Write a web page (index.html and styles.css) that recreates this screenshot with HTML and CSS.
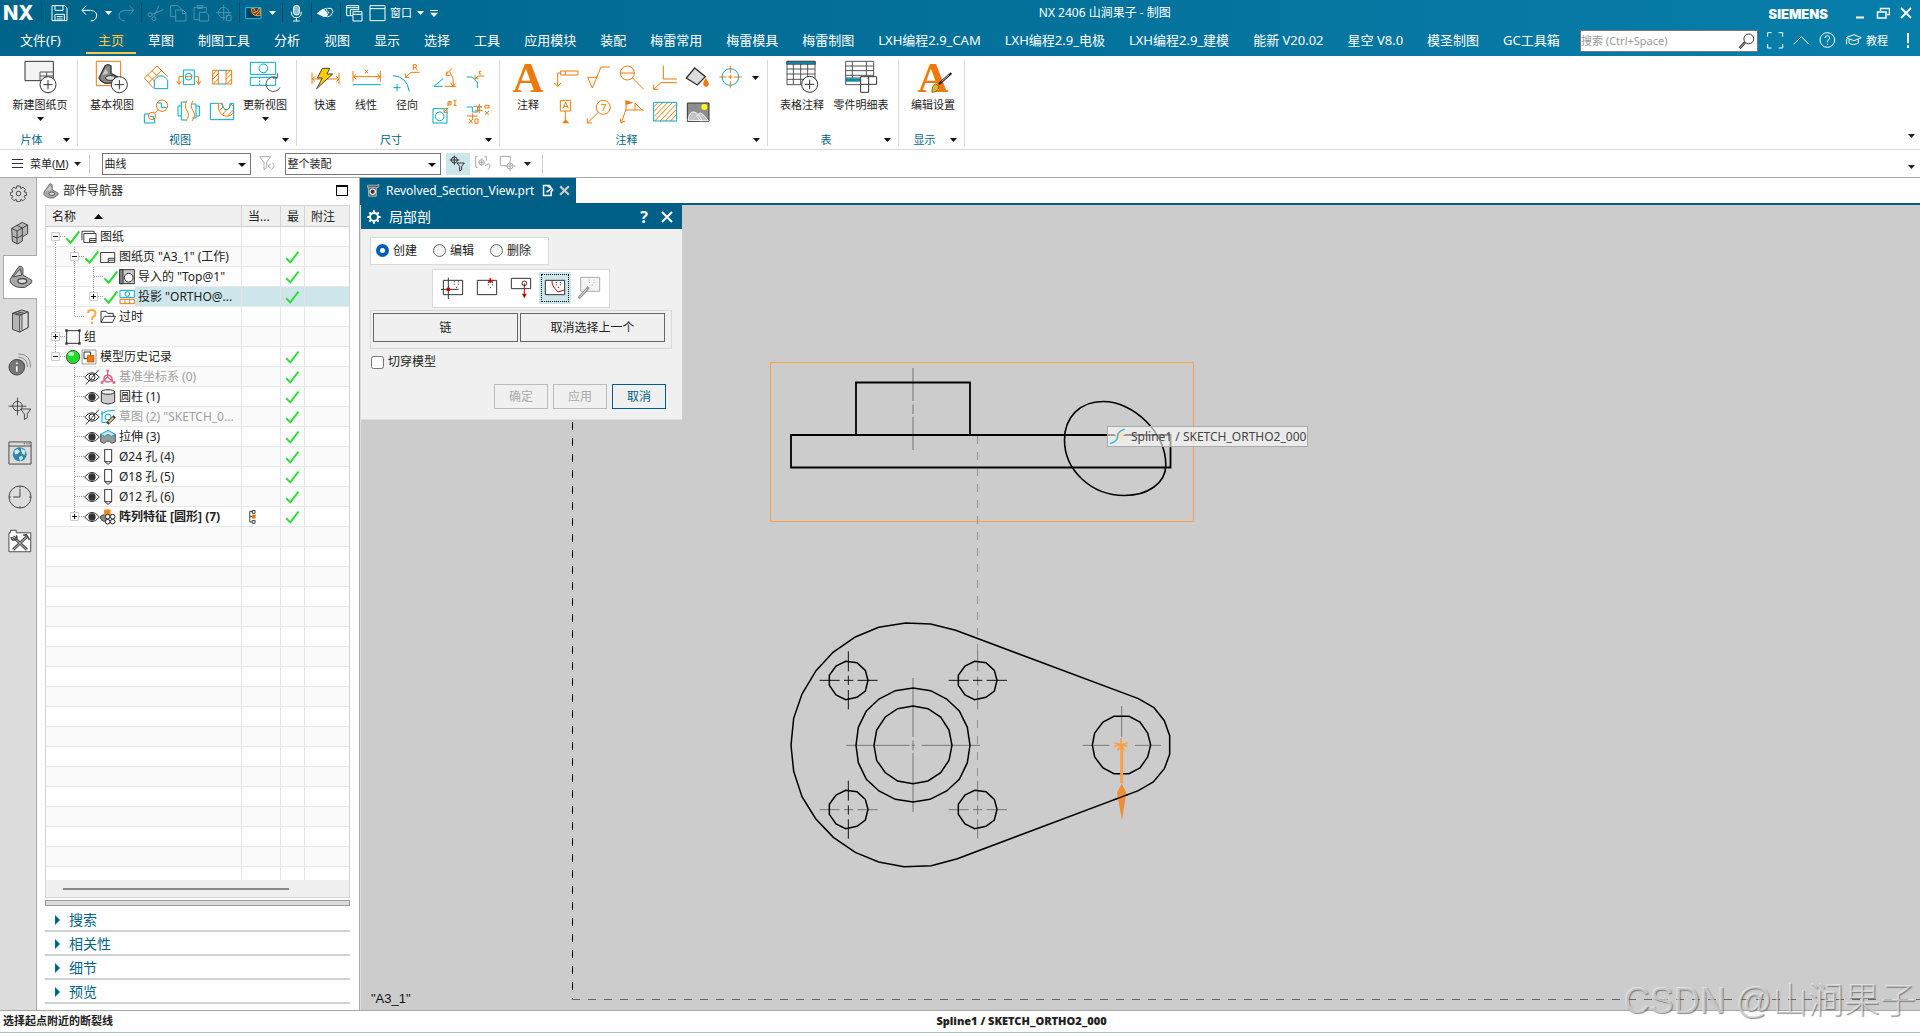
FILE: index.html
```html
<!DOCTYPE html>
<html lang="zh-CN">
<head>
<meta charset="utf-8">
<title>NX 2406 山涧果子 - 制图</title>
<link rel="stylesheet" href="styles.css">
</head>
<body>
<svg class="defs" aria-hidden="true">
  <symbol id="down" viewBox="0 0 9 5"><path d="M0 0h9L4.500 5z" fill="currentColor"/></symbol>
  <symbol id="check" viewBox="0 0 48 48"><path d="M4 28l13 13L43 7" fill="none" stroke="#26e02f" stroke-width="6"/></symbol>
  <symbol id="plus" viewBox="0 0 9 9"><path d="M.5 .5h8v8h-8z" fill="#fff" stroke="#ccc"/><path d="M2 4.500h5M4.500 2v5" stroke="#111"/></symbol>
  <symbol id="minus" viewBox="0 0 9 9"><path d="M.5 .5h8v8h-8z" fill="#fff" stroke="#ccc"/><path d="M2 4.500h5" stroke="#111"/></symbol>
  <symbol id="eye" viewBox="0 0 48 48"><path d="M2 24Q24-4 46 24Q24 52 2 24z" fill="none" stroke="#333" stroke-width="3"/><circle cx="24" cy="24" r="11" fill="#333"/></symbol>
  <symbol id="eyeoff" viewBox="0 0 48 48"><path d="M2 24Q24-2 46 24Q24 50 2 24zM6 46L44 3" fill="none" stroke="#333" stroke-width="3"/><circle cx="24" cy="24" r="9" fill="none" stroke="#333" stroke-width="3"/></symbol>
  <symbol id="hole" viewBox="0 0 48 48"><path d="M14 1h21v37H14zM14 38l10 8 11-8" fill="#fff" stroke="#333" stroke-width="3"/></symbol>
  <symbol id="part" viewBox="22 268 76 76"><path d="M26 314l4-8 24-34q8-2 12 6v22l28 16v8l-22 15q-32 4-46-17z" fill="#a8a8a8" stroke="#444" stroke-width="3"/><path d="M34 306l24-26 4 20z" fill="#ccc"/><ellipse cx="64" cy="319" rx="14" ry="8" fill="#ddd" stroke="#444" stroke-width="4"/></symbol>
</svg>

<header class="top">
  <div class="titlebar">
    <span class="brand">NX</span>
    <div class="qat">
      <i class="sep"></i>
      <button class="q q-wide" aria-label="保存"><svg viewBox="151 14 51 51"><path d="M154 16h38l7 7v38h-45zM163 16v14h24V16M163 61V42h28v19M168 49h18M168 56h18"/></svg></button>
      <button class="q" aria-label="撤消"><svg viewBox="239 14 51 51"><path d="M254 16l-12 14 12 13M242 30h26q20 3 18 17t-18 15"/></svg></button>
      <button class="q q-arrow" aria-label="撤消列表"><svg><use href="#down"/></svg></button>
      <button class="q dim" disabled aria-label="重做"><svg viewBox="353 14 51 51"><path d="M388 16l12 14-12 13M400 30h-26q-20 3-18 17t18 15"/></svg></button>
      <i class="sep"></i>
      <button class="q dim" disabled aria-label="剪切"><svg viewBox="440 14 51 51"><path d="M489 28l-34 14M476 16l-14 30"/><circle cx="449" cy="43" r="6"/><circle cx="461" cy="55" r="6"/></svg></button>
      <button class="q dim" disabled aria-label="复制"><svg viewBox="509 14 51 51"><path d="M526 49h-15V16h22l9 9v4M526 29h22l9 9v24h-31zM546 29v11h11"/></svg></button>
      <button class="q dim" disabled aria-label="粘贴"><svg viewBox="579 14 51 51"><path d="M598 58h-16V21h37v13M592 24v-8h16v8zM598 36h20l8 8v18h-28z"/></svg></button>
      <button class="q dim" disabled aria-label="定位"><svg viewBox="649 14 51 51"><circle cx="672" cy="37" r="16"/><path d="M649 37h46M672 14v46M680 45h14v16h-14z"/></svg></button>
      <i class="sep"></i>
      <button class="q" aria-label="局部剖"><svg viewBox="734 14 51 51"><path d="M736 22h46v33h-46z" fill="#00405c" stroke="#1fc3f3"/><path d="M753 24q0 20 14 22h13V24l-6 0q0 10-6 10t-6-10z" fill="#7a4a20" stroke="#f29b3c"/><path d="M758 38l10-4M766 45l12-12" stroke="#f29b3c"/></svg></button>
      <button class="q q-arrow" aria-label="视图列表"><svg><use href="#down"/></svg></button>
      <i class="sep"></i>
      <button class="q" aria-label="语音"><svg viewBox="864 14 51 51"><rect x="881" y="15" width="17" height="29" rx="8" fill="#8fbdd0"/><path d="M874 34q0 18 15 18t15-18M889 52v10M879 62h20"/></svg></button>
      <i class="sep"></i>
      <button class="q" aria-label="触控"><svg viewBox="953 14 51 51"><path d="M954 39l17-12 10 8 2 12-14-1z" fill="#fff"/><path d="M971 28l9-4 4 10M984 24h12l5 10-7 12-10 4M970 48h14M988 34l-4 10"/></svg></button>
      <i class="sep"></i>
      <button class="q" aria-label="切换窗口"><svg viewBox="1039 14 51 51"><path d="M1050 46h-9V16h36v14M1041 22h36M1052 46V28h25M1060 62V34h27v28zM1060 42h27M1052 46h8"/></svg></button>
      <button class="q q-label" aria-label="窗口"><svg viewBox="1108 14 51 51"><path d="M1111 16h45v45h-45zM1111 25h45"/></svg><span>窗口</span><svg class="tri"><use href="#down"/></svg></button>
      <button class="q q-arrow" aria-label="自定义"><svg class="bar" viewBox="0 0 9 8"><path d="M0 0h9v1H0zM0 3h9L4.500 8z"/></svg></button>
    </div>
    <h1>NX 2406 山涧果子 - 制图</h1>
    <span class="siemens">SIEMENS</span>
    <div class="win">
      <button aria-label="最小化"><svg viewBox="0 0 14 14"><path d="M3 11.500h8" stroke-width="2"/></svg></button>
      <button aria-label="还原"><svg viewBox="0 0 14 14"><path d="M4.500 5V2.500h9v6H11M1.500 6h8.500v6H1.500z" stroke-width="1.500"/></svg></button>
      <button aria-label="关闭"><svg viewBox="0 0 14 14"><path d="M2 2l10 10M12 2L2 12" stroke-width="1.800"/></svg></button>
    </div>
  </div>
  <nav class="tabs">
    <a class="file" href="#">文件(F)</a><a class="on" href="#">主页</a><a href="#">草图</a><a href="#">制图工具</a><a href="#">分析</a><a href="#">视图</a><a href="#">显示</a><a href="#">选择</a><a href="#">工具</a><a href="#">应用模块</a><a href="#">装配</a><a href="#">梅雷常用</a><a href="#">梅雷模具</a><a href="#">梅雷制图</a><a href="#">LXH编程2.9_CAM</a><a href="#">LXH编程2.9_电极</a><a href="#">LXH编程2.9_建模</a><a href="#">能新 V20.02</a><a href="#">星空 V8.0</a><a href="#">模圣制图</a><a href="#">GC工具箱</a>
    <div class="find">
      <input type="search" aria-label="搜索" placeholder="搜索 (Ctrl+Space)">
      <svg viewBox="955 98 52 52"><circle cx="988" cy="116" r="15" fill="none" stroke="#333" stroke-width="3"/><path d="M976 127l-16 17" stroke="#333" stroke-width="8"/><path d="M975 129l-14 14" stroke="#ccc" stroke-width="3"/></svg>
    </div>
    <div class="tools">
      <button aria-label="全屏"><svg viewBox="1043 98 51 51"><path d="M1045 112v-12h12M1078 100h12v12M1090 134v12h-12M1057 146h-12v-12"/></svg></button>
      <button aria-label="最小化功能区"><svg viewBox="1120 98 51 51"><path d="M1122 135l23-23 23 23"/></svg></button>
      <button aria-label="帮助"><svg viewBox="1197 98 51 51"><circle cx="1222" cy="122" r="22"/><path d="M1215 116q0-7 7-7t7 7q0 4-7 9v4M1222 133v4"/></svg></button>
      <button class="learn"><svg viewBox="1275 98 51 51"><path d="M1278 115l24-9 22 9-22 9zM1287 120v12q14 8 28 0v-12M1280 118v17"/></svg>教程</button>
      <button class="alert" aria-label="提醒"><svg viewBox="0 0 6 18"><path d="M3 1v11M3 14v3" stroke-width="2"/></svg></button>
    </div>
  </nav>
</header>

<section class="ribbon">
  <div class="group">
    <div class="body">
      <button class="cmd wide"><svg viewBox="67 180 105 105"><path class="k" d="M73 184h85v58H73z" fill="#f4f4f4"/><path class="g" d="M118 242v-26h40M118 228h40M138 216v26"/><circle class="k" cx="142" cy="254" r="24" fill="#fff"/><path class="k" d="M142 240v28M128 254h28"/></svg><span>新建图纸页</span><svg class="tri"><use href="#down"/></svg></button>
    </div>
    <footer><span>片体</span><svg class="tri"><use href="#down"/></svg></footer>
  </div>
  <div class="group">
    <div class="body">
      <button class="cmd"><svg viewBox="288 180 105 105"><path class="o" d="M292 184h73v73h-73z"/><path d="M300 234l18-36q8-8 18 0v22l22 12-18 16q-28 8-40-14z" fill="#888" stroke="#333" stroke-width="4"/><path d="M310 226l10-20 8 14z" fill="#ccc"/><ellipse cx="334" cy="234" rx="14" ry="7" fill="#ddd" stroke="#333" stroke-width="3"/><circle class="k" cx="361" cy="254" r="24" fill="#fff"/><path class="k" d="M361 240v28M347 254h28"/></svg><span>基本视图</span></button>
      <div class="small c3">
        <button aria-label="投影视图"><svg viewBox="423 190 90 84"><path class="o" d="M460 262l-27-30 38-36 32 32M444 222l22 22M456 210l20 20M446 246l36-34"/><path class="c" d="M463 264v-26l13-12h14l13 12v26z" fill="#fff"/></svg></button>
        <button aria-label="剖视图"><svg viewBox="523 190 90 84"><path class="c" d="M551 208h33v44h-33z"/><circle class="c" cx="567" cy="228" r="10"/><path class="o" d="M551 228h-13v22M532 242l6 10 6-10M584 228h13v22M591 242l6 10 6-10M558 228h18"/></svg></button>
        <button aria-label="剖切线"><svg viewBox="621 190 90 84"><path class="o" d="M638 209h17v41h-17zM678 209h17v41h-17zM638 222l13-13M638 236l17-17M642 248l13-13M678 222l13-13M678 236l17-17M682 248l13-13"/><path class="c" d="M655 209h23M655 250h23"/></svg></button>
        <button aria-label="局部放大图"><svg viewBox="423 295 90 84"><path class="c" d="M448 343h-15v27h31v-15"/><circle class="o" cx="486" cy="318" r="17"/><circle class="o" cx="456" cy="349" r="11"/><path class="o" d="M464 341l10-11"/><path class="c" d="M472 310h12v14h16M450 350h10v8"/></svg></button>
        <button aria-label="断开视图"><svg viewBox="523 295 90 84"><path class="c" d="M560 307h-15v54h15M545 319h-10v30h10M578 313h11v42h-11M589 319h10v30h-10"/><path class="o" d="M562 303q-10 16 0 30t-3 31M580 303q-10 16 0 30t-3 31"/></svg></button>
        <button aria-label="局部剖视图"><svg viewBox="621 295 90 84"><path class="o" d="M655 311q-2 36 24 39 16 0 21-12v-18l-9-9q-1 19-11 19t-14-19zM660 330l10-8M668 344l12-14M684 348l14-16"/><path class="c" d="M631 311h24M691 311h10v49h-70v-49M666 311q2 19 13 19t12-19"/></svg></button>
      </div>
      <button class="cmd"><svg viewBox="744 180 105 105"><path class="c" d="M751 187h76v36h-76zM751 232h76v24h-76M751 232v24"/><circle class="c" cx="790" cy="205" r="13"/><path class="c" d="M779 232v24" stroke-dasharray="5 4"/><path class="g" d="M840 262a22 22 0 1 1-8-28M832 220v14h-14"/></svg><span>更新视图</span><svg class="tri"><use href="#down"/></svg></button>
    </div>
    <footer><span>视图</span><svg class="tri"><use href="#down"/></svg></footer>
  </div>
  <div class="group">
    <div class="body">
      <button class="cmd narrow"><svg viewBox="925 180 105 105"><path class="o" d="M937 218v35M1018 218v35M938 237h80M946 229l-8 8 8 8M1010 229l8 8-8 8"/><path d="M968 205h22l-8 17h17l-48 44 17-32h-15z" fill="#fc0" stroke="#444" stroke-width="3"/></svg><span>快速</span></button>
      <button class="cmd narrow"><svg viewBox="1048 180 105 105"><path class="o" d="M1060 213v32M1142 213v32M1061 230h80M1070 222l-8 8 8 8M1133 222l8 8-8 8M1096 209l9 11M1105 209l-9 11"/><path class="c" d="M1060 254h83"/></svg><span>线性</span></button>
      <button class="cmd narrow"><svg viewBox="1168 180 105 105"><path class="c" d="M1177 227q42 2 49 48M1189 252v22M1178 263h22"/><path class="o" d="M1257 217h-26l-17 15M1214 221v11h11M1238 211v-17h8q4 4 0 8h-8M1244 202l6 9"/></svg><span>径向</span></button>
      <div class="small c2">
        <button aria-label="角度"><svg viewBox="1291 190 90 84"><path class="c" d="M1303 257h26M1303 257l27-23"/><path class="o" d="M1338 222l20-19M1342 212l-2 12h12M1350 212q14 20 11 42M1353 246l7 11 9-9M1334 257h36"/></svg></button>
        <button aria-label="倒角"><svg viewBox="1390 190 90 84"><path class="c" d="M1401 229h17l15 15v18"/><path class="o" d="M1454 226h-17l-11 8M1426 224v10h10M1445 212h-6v8h6"/></svg></button>
        <button aria-label="孔标注"><svg viewBox="1291 295 90 84"><path class="c" d="M1300 327h42v43h-42z"/><circle class="c" cx="1320" cy="350" r="13"/><path class="o" d="M1332 338l14-14M1333 326v12h12M1345 306h9v10h-9zM1343 318l12-14M1362 302h9M1366 302v15M1362 317h9"/></svg></button>
        <button aria-label="坐标尺寸"><svg viewBox="1390 295 90 84"><path class="c" d="M1401 322h17v15h16v-15h13"/><path class="o" d="M1422 320h24M1425 332h24M1439 313v28M1402 349h32M1419 341v20M1456 317h12v8h-12zM1456 334l12 11M1468 334l-12 11M1408 358l11 13M1419 358l-11 13M1426 358h9v13h-9z"/></svg></button>
      </div>
    </div>
    <footer><span>尺寸</span><svg class="tri"><use href="#down"/></svg></footer>
  </div>
  <div class="group">
    <div class="body">
      <button class="cmd narrow"><span class="letter">A</span><span>注释</span></button>
      <div class="small c6">
        <button aria-label="特征控制框"><svg viewBox="213 190 90 84"><path class="o" d="M242 211h52v12h-52zM256 211v12M242 217h-9v40M223 247l10 10 10-10"/></svg></button>
        <button aria-label="表面粗糙度"><svg viewBox="312 190 90 84"><path class="o" d="M323 230h30M323 230l14 32 26-63h27"/></svg></button>
        <button aria-label="焊接"><svg viewBox="411 190 90 84"><circle class="o" cx="442" cy="217" r="21"/><path class="o" d="M421 217h42M458 232l33 34"/></svg></button>
        <button aria-label="相交符号"><svg viewBox="510 190 90 84"><path class="o" d="M550 195v40h41M521 266l22-20h48M521 252v14h14"/></svg></button>
        <button aria-label="区域填充"><svg viewBox="609 190 90 84"><path d="M619 232l25-30 32 26-24 25z" fill="#ddd" stroke="#333" stroke-width="4"/><path d="M677 232q18 22 2 27-18-3-2-27z" fill="#ec7a08"/></svg></button>
        <button aria-label="中心标记"><svg viewBox="708 190 90 84"><circle class="c" cx="751" cy="229" r="25"/><path class="o" d="M751 195v22M751 241v22M718 229h22M762 229h23M745 229h12M751 223v12"/></svg></button>
        <button aria-label="基准特征"><svg viewBox="213 295 90 84"><path class="o" d="M241 302h31v32h-31zM256 334v30M249 326l8-18 8 18M252 320h10"/><path d="M246 371l11-12 11 12z" fill="#ec7a08"/></svg></button>
        <button aria-label="符号标注"><svg viewBox="312 295 90 84"><circle class="o" cx="370" cy="323" r="21"/><path class="o" d="M355 338l-33 32M322 356v14h14M363 314h14l-9 20"/></svg></button>
        <button aria-label="焊接符号"><svg viewBox="411 295 90 84"><path class="o" d="M424 369l13-38h54M421 357l2 13 12-6M438 331v-29M465 331v-21l21 21"/><path d="M437 302l24 7-24 7z" fill="#ec7a08"/></svg></button>
        <button aria-label="剖面线"><svg viewBox="510 295 90 84"><path class="o" d="M523 334l26-26M523 350l41-42M524 364l54-56M540 364l48-50M556 364l32-34M572 364l16-18M523 320l12-12"/><path class="c" d="M521 308h69v56h-69z"/></svg></button>
        <button aria-label="图像"><svg viewBox="609 295 90 84"><path d="M622 310h65v55h-65z" fill="#8e8e8e" stroke="#333" stroke-width="3"/><circle cx="673" cy="322" r="9" fill="#ff0"/><path d="M624 362q4-28 18-25t24 26zM650 350q8-14 16-8t19 21h-24z" fill="#c4c4c8" stroke="#f4f4f4" stroke-width="3"/></svg></button>
      </div>
      <button class="more" aria-label="更多注释"><svg class="tri"><use href="#down"/></svg></button>
    </div>
    <footer><span>注释</span><svg class="tri"><use href="#down"/></svg></footer>
  </div>
  <div class="group">
    <div class="body">
      <button class="cmd"><svg viewBox="917 180 105 105"><path class="g" d="M923 184h84v70h-84zM923 207h84M923 222h84M923 238h84M942 192v62M964 192v62M985 192v62"/><path d="M922 184h86v9h-86z" fill="#1787ab" stroke="#333" stroke-width="2"/><circle class="k" cx="991" cy="253" r="24" fill="#fff"/><path class="k" d="M991 239v28M977 253h28"/></svg><span>表格注释</span></button>
      <button class="cmd wide"><svg viewBox="1089 180 105 105"><path class="g" d="M1094 184h84v50h-84zM1094 198h84M1094 212h84M1094 226h84M1114 184v50M1156 184v44M1094 234v20h44"/><path d="M1093 235h46v10h-46z" fill="#1787ab"/><path class="k" d="M1139 230h48v23h-48zM1139 253v24h24v-47" fill="#fff"/></svg><span>零件明细表</span></button>
    </div>
    <footer><span>表</span><svg class="tri"><use href="#down"/></svg></footer>
  </div>
  <div class="group">
    <div class="body">
      <button class="cmd"><span class="letter">A<svg viewBox="1348 215 62 64"><path d="M1409 218l-38 34" stroke="#222" stroke-width="7"/><path d="M1402 224l-23 20" stroke="#bbb" stroke-width="3"/><path d="M1350 277q-2-20 12-26l9 9q-2 16-21 17z" fill="#e0b52f" stroke="#554400" stroke-width="2"/></svg></span><span>编辑设置</span></button>
    </div>
    <footer><span>显示</span><svg class="tri"><use href="#down"/></svg></footer>
  </div>
  <svg class="tri end"><use href="#down"/></svg>
</section>

<section class="selbar">
  <button class="menu"><svg viewBox="0 0 11 9"><path d="M0 .5h11M0 4.500h11M0 8.500h11" stroke="#333"/></svg>菜单(<u>M</u>)<svg class="tri"><use href="#down"/></svg></button>
  <i class="sep"></i>
  <span class="combo combo-a"><select aria-label="类型过滤器"><option>曲线</option></select></span>
  <button class="s off" aria-label="重置过滤器"><svg viewBox="777 465 51 51"><path d="M779 470h33l-12 17v16l-8 6v-22zM818 488q10 12-4 20M812 492l-8 6 8 6"/></svg></button>
  <span class="combo combo-b"><select aria-label="选择范围"><option>整个装配</option></select></span>
  <button class="s on" aria-label="捕捉过滤"><svg viewBox="1346 465 51 51"><circle cx="1362" cy="480" r="9"/><path d="M1348 480h29M1362 467v28M1370 489h22l-8 10v10l-6 4v-14z"/></svg></button>
  <button class="s off" aria-label="选择组"><svg viewBox="1424 465 51 51"><path d="M1432 469h-6v33h6M1452 469h6v14M1434 487h20M1444 475v24M1464 490q10 10-2 20M1462 492l-8 6"/><circle cx="1444" cy="487" r="8"/></svg></button>
  <button class="s off" aria-label="优先选择"><svg viewBox="55 465 51 51"><path d="M80 497H59v-28h30v14M72 498h32M88 483v31"/><circle cx="88" cy="498" r="9"/></svg></button>
  <button class="s s-arrow" aria-label="更多"><svg class="tri"><use href="#down"/></svg></button>
  <i class="sep"></i>
  <svg class="tri end"><use href="#down"/></svg>
</section>

<main>
  <aside class="rail">
    <button class="rail-gear" aria-label="设置"><svg viewBox="28 28 52 52"><circle cx="54" cy="54" r="7"/><path d="M49 31h10l2 8 7-4 7 7-4 7 8 2v8l-8 3 4 7-7 7-7-4-2 7h-10l-2-7-7 4-7-7 4-7-8-3v-8l8-2-4-7 7-7 7 4z"/></svg></button>
    <button aria-label="装配导航器"><svg viewBox="23 136 72 72"><path d="M34 158l32-18 16 8v26l-16 10v12l-14 9-16-8z" fill="#b5b5b5"/><path d="M34 158l16 8v38M50 166l32-18M66 157v27M36 181l14 6 16-8M50 149l16 8"/></svg></button>
    <button class="on" aria-label="部件导航器"><svg><use href="#part"/></svg></button>
    <button aria-label="重用库"><svg viewBox="24 402 74 72"><path d="M38 414l28-10 20 6v48l-26 14-22-8z" fill="#b5b5b5"/><path d="M60 421l26-11v48l-26 14z" fill="#ddd"/><path d="M38 414l22 7M45 412l22 7M53 409l22 6M67 420v46"/></svg></button>
    <button aria-label="信息"><svg viewBox="22 534 74 72"><path d="M54 536q40 0 37 42M54 546q28 2 28 30M54 554q20 2 20 20" stroke="#888"/><circle cx="49" cy="577" r="24" fill="#777"/><path d="M49 574v16M49 562v5" stroke="#fff" stroke-width="5"/></svg></button>
    <button aria-label="选择过滤"><svg viewBox="22 80 76 76"><circle cx="52" cy="109" r="15"/><path d="M24 109h56M52 82v56M62 118h32l-11 16v12l-9 5v-17z"/></svg></button>
    <button aria-label="网页浏览器"><svg viewBox="22 211 76 76"><path d="M25 214h70v70H25zM25 227h70" /><circle cx="59" cy="253" r="22" fill="#2d86a8" stroke="none"/><path d="M42 242l10-6 8 8-8 8-8 2zM62 234l16 8-4 14-8-6zM56 262l10-4 4 8-10 8z" fill="#cfe8f0" stroke="none"/><path d="M72 220h4M80 220h4M87 220h4"/></svg></button>
    <button aria-label="历史记录"><svg viewBox="22 343 74 74"><circle cx="59" cy="380" r="34"/><path d="M59 354v26H38M59 346v6M59 408v6M25 380h6M87 380h6"/></svg></button>
    <button aria-label="加工向导"><svg viewBox="22 476 76 76"><path d="M25 548v-60h5v-8h18v8h46v60z" fill="#fff"/><path d="M38 500l44 42M82 500l-44 42" stroke="#333" stroke-width="9"/><path d="M38 500l44 42M82 500l-44 42" stroke="#aaa" stroke-width="4"/><path d="M32 502q2 12 12 8t4-14M70 496l10-2 10 16" stroke-width="5"/></svg></button>
  </aside>

  <section class="nav">
    <header><svg><use href="#part"/></svg><h2>部件导航器</h2><button aria-label="还原窗口"></button></header>
    <div class="tree">
      <div class="rows">
      <table>
        <colgroup><col><col class="w-cur"><col class="w-new"><col class="w-note"></colgroup>
        <thead><tr><th>名称<svg viewBox="0 0 9 5" class="up"><path d="M0 5h9L4.500 0z"/></svg></th><th>当...</th><th>最</th><th>附注</th></tr></thead>
        <tbody>
        <tr><td><div class="n"><svg class="g0"><path d="M9.500 9v10M14 9.500h6"/><use href="#minus" x="5" y="5" width="9" height="9"/></svg><svg class="ic"><use href="#check"/></svg><svg class="ic" viewBox="243 166 50 42"><path class="k" d="M246 197v-28h38v6M252 176h38v28h-38zM270 204v-12h20M270 198h20"/></svg><span>图纸</span></div></td><td></td><td></td><td></td></tr>
        <tr><td><div class="n"><svg class="g1"><path d="M9.500 0v19M28.500 0v19M33 9.500h6"/><use href="#minus" x="24" y="5" width="9" height="9"/></svg><svg class="ic"><use href="#check"/></svg><svg class="ic" viewBox="300 224 50 42"><path class="k" d="M302 231h44v31h-44zM326 262v-13h20M326 255h20"/></svg><span>图纸页 "A3_1" (工作)</span></div></td><td></td><td><svg class="ic"><use href="#check"/></svg></td><td></td></tr>
        <tr><td><div class="n"><svg class="g2"><path d="M9.500 0v19M28.500 0v19M47.500 0v19M48 9.500h10"/></svg><svg class="ic"><use href="#check"/></svg><svg class="ic" viewBox="357 282 48 48"><path class="k" d="M359 284h44v42h-44z" fill="#ccc"/><path class="k" d="M359 284h10v42h-10z" fill="#888"/><circle class="k" cx="386" cy="308" r="13" fill="#fff"/></svg><span>导入的 "Top@1"</span></div></td><td></td><td><svg class="ic"><use href="#check"/></svg></td><td></td></tr>
        <tr class="sel"><td><div class="n"><svg class="g2"><path d="M9.500 0v19M28.500 0v19M47.500 0v10M52 9.500h6"/><use href="#plus" x="43" y="5" width="9" height="9"/></svg><svg class="ic"><use href="#check"/></svg><svg class="ic" viewBox="356 342 48 48"><path class="c" d="M359 346h43v22h-43z"/><circle class="c" cx="381" cy="357" r="7"/><path class="o" d="M359 373h43v13h-43zM374 373v13M388 373v13"/></svg><span>投影 "ORTHO@...</span></div></td><td></td><td><svg class="ic"><use href="#check"/></svg></td><td></td></tr>
        <tr><td><div class="n"><svg class="g1"><path d="M9.500 0v19M28.500 0v10M29 9.500h10"/></svg><svg class="ic" viewBox="252 402 48 48"><path d="M264 414q0-9 11-9t12 9q0 7-7 11-4 3-4 10M276 440v7" fill="none" stroke="#ffa940" stroke-width="6"/></svg><svg class="ic" viewBox="300 402 48 48"><path class="k" d="M303 442v-33h15l5 6h17v9M303 442l10-18h33l-8 18z"/></svg><span>过时</span></div></td><td></td><td></td><td></td></tr>
        <tr><td><div class="n"><svg class="g0"><path d="M9.500 0v19M14 9.500h6"/><use href="#plus" x="5" y="5" width="9" height="9"/></svg><svg class="ic" viewBox="195 462 48 48"><path class="k" d="M200 467h38v38h-38z"/><path d="M196 463h7v7h-7zM235 463h7v7h-7zM196 502h7v7h-7zM235 502h7v7h-7z" fill="#333"/></svg><span>组</span></div></td><td></td><td></td><td></td></tr>
        <tr><td><div class="n"><svg class="g0"><path d="M9.500 0v10M14 9.500h6"/><use href="#minus" x="5" y="5" width="9" height="9"/></svg><svg class="ic" viewBox="0 0 48 48"><circle cx="24" cy="24" r="20" fill="#1fdc2a" stroke="#555" stroke-width="3"/><ellipse cx="19" cy="15" rx="9" ry="6" fill="#b7ffb9"/></svg><svg class="ic" viewBox="243 522 48 48"><path d="M246 525h42v42h-42z" fill="none" stroke="#999" stroke-width="3"/><path class="k" d="M252 531h20v20h-20z" fill="#fff"/><path d="M262 541h20v20h-20z" fill="#ec7a08" stroke="#a50" stroke-width="2"/></svg><span>模型历史记录</span></div></td><td></td><td><svg class="ic"><use href="#check"/></svg></td><td></td></tr>
        <tr class="hid"><td><div class="n"><svg class="g1"><path d="M28.500 0v19M29 9.500h10"/></svg><svg class="ic"><use href="#eyeoff"/></svg><svg class="ic" viewBox="0 0 48 48"><path d="M23 4v20L6 40M23 24l18 16M12 34q-2-16 11-16t14 16q-13 10-25 0" fill="none" stroke="#d5628a" stroke-width="4"/><path d="M19 2h8v6h-8zM2 37h8v7H2zM38 37h8v7h-8z" fill="#d5628a"/></svg><span>基准坐标系 (0)</span></div></td><td></td><td><svg class="ic"><use href="#check"/></svg></td><td></td></tr>
        <tr><td><div class="n"><svg class="g1"><path d="M28.500 0v19M29 9.500h10"/></svg><svg class="ic"><use href="#eye"/></svg><svg class="ic" viewBox="0 0 48 48"><path class="k" d="M4 9v30q20 12 40 0V9" fill="#ccc"/><ellipse class="k" cx="24" cy="9" rx="20" ry="7" fill="#eee"/></svg><span>圆柱 (1)</span></div></td><td></td><td><svg class="ic"><use href="#check"/></svg></td><td></td></tr>
        <tr class="hid"><td><div class="n"><svg class="g1"><path d="M28.500 0v19M29 9.500h10"/></svg><svg class="ic"><use href="#eyeoff"/></svg><svg class="ic" viewBox="0 0 48 48"><path class="c" d="M6 6v34h18M2 16Q20 2 44 4"/><circle class="c" cx="24" cy="24" r="9"/><path d="M22 44l22-22" stroke="#333" stroke-width="9"/><path d="M26 40l14-14" stroke="#fc6" stroke-width="5"/></svg><span>草图 (2) "SKETCH_0...</span></div></td><td></td><td><svg class="ic"><use href="#check"/></svg></td><td></td></tr>
        <tr><td><div class="n"><svg class="g1"><path d="M28.500 0v19M29 9.500h10"/></svg><svg class="ic"><use href="#eye"/></svg><svg class="ic" viewBox="0 0 48 48"><path d="M2 16v22l10 5 8-6h8l8 6 10-5V16z" fill="#999" stroke="#555" stroke-width="3"/><path class="c" d="M2 16L24 4l22 12-12 6-10-6-10 6z" fill="#ddd"/></svg><span>拉伸 (3)</span></div></td><td></td><td><svg class="ic"><use href="#check"/></svg></td><td></td></tr>
        <tr><td><div class="n"><svg class="g1"><path d="M28.500 0v19M29 9.500h10"/></svg><svg class="ic"><use href="#eye"/></svg><svg class="ic"><use href="#hole"/></svg><span>Ø24 孔 (4)</span></div></td><td></td><td><svg class="ic"><use href="#check"/></svg></td><td></td></tr>
        <tr><td><div class="n"><svg class="g1"><path d="M28.500 0v19M29 9.500h10"/></svg><svg class="ic"><use href="#eye"/></svg><svg class="ic"><use href="#hole"/></svg><span>Ø18 孔 (5)</span></div></td><td></td><td><svg class="ic"><use href="#check"/></svg></td><td></td></tr>
        <tr><td><div class="n"><svg class="g1"><path d="M28.500 0v19M29 9.500h10"/></svg><svg class="ic"><use href="#eye"/></svg><svg class="ic"><use href="#hole"/></svg><span>Ø12 孔 (6)</span></div></td><td></td><td><svg class="ic"><use href="#check"/></svg></td><td></td></tr>
        <tr class="strong"><td><div class="n"><svg class="g1"><path d="M28.500 0v10M33 9.500h6"/><use href="#plus" x="24" y="5" width="9" height="9"/></svg><svg class="ic"><use href="#eye"/></svg><svg class="ic" viewBox="0 0 48 48"><path d="M2 22q8-8 20-4v20Q6 38 2 30z" fill="#888" stroke="#444" stroke-width="3"/><path d="M12 3q10-4 20 0v17H12z" fill="#f28a1c"/><g fill="#fff" stroke="#222" stroke-width="3"><circle cx="23" cy="23" r="7"/><circle cx="38" cy="23" r="7"/><circle cx="23" cy="38" r="7"/><circle cx="38" cy="38" r="7"/></g></svg><span>阵列特征 [圆形] (7)</span></div></td><td><svg class="ic pat" viewBox="740 418 48 48"><path class="k" d="M760 424h-8v34h8M752 440h8M760 421h9v9h-9zM760 453h9v9h-9z"/><path d="M759 435h12v12h-12z" fill="#ec7a08"/></svg></td><td><svg class="ic"><use href="#check"/></svg></td><td></td></tr>
        <tr><td></td><td></td><td></td><td></td></tr><tr><td></td><td></td><td></td><td></td></tr><tr><td></td><td></td><td></td><td></td></tr>
        <tr><td></td><td></td><td></td><td></td></tr><tr><td></td><td></td><td></td><td></td></tr><tr><td></td><td></td><td></td><td></td></tr>
        <tr><td></td><td></td><td></td><td></td></tr><tr><td></td><td></td><td></td><td></td></tr><tr><td></td><td></td><td></td><td></td></tr>
        <tr><td></td><td></td><td></td><td></td></tr><tr><td></td><td></td><td></td><td></td></tr><tr><td></td><td></td><td></td><td></td></tr>
        <tr><td></td><td></td><td></td><td></td></tr><tr><td></td><td></td><td></td><td></td></tr><tr><td></td><td></td><td></td><td></td></tr>
        <tr><td></td><td></td><td></td><td></td></tr><tr><td></td><td></td><td></td><td></td></tr><tr><td></td><td></td><td></td><td></td></tr>
        </tbody>
      </table>
      </div>
      <div class="hscroll"><i></i></div>
    </div>
    <div class="split"></div>
    <div class="acc">
      <button>搜索</button><button>相关性</button><button>细节</button><button>预览</button>
    </div>
  </section>

  <section class="work">
    <div class="docs">
      <a class="doc" href="#"><svg viewBox="52 26 42 44"><path d="M57 38h25v29H57z" fill="#333" stroke="#ddd" stroke-width="3"/><path d="M53 30h32l6-3v9l-6 3H53z" fill="#666" stroke="#ddd" stroke-width="2"/><circle cx="70" cy="52" r="9" fill="none" stroke="#fff" stroke-width="4"/></svg><span>Revolved_Section_View.prt</span><svg viewBox="583 30 34 34"><path d="M603 34h-16v26h20v-10M595 33l13 9-13 9M603 34l4 6M612 44l-6 8" fill="none" stroke="#fff" stroke-width="4"/></svg><svg viewBox="0 0 12 12"><path d="M2 2l8 8M10 2l-8 8" stroke="#ccc" stroke-width="2"/></svg></a>
    </div>
    <div class="canvas">
      <svg class="drawing" aria-label="图纸 A3_1">
        <g transform="translate(-361 -205)">
          <path d="M572.500 406V999" stroke="#000" stroke-dasharray="8 8"/>
          <path d="M572 999.500H1920" stroke="#666" stroke-dasharray="8 8"/>
          <path d="M770.500 362.500h423v159h-423z" stroke="#fba04a"/>
          <path d="M977.500 436V655" stroke="#909090" stroke-dasharray="8 8"/>
          <path d="M977.500 720V782" stroke="#909090" stroke-dasharray="8 8"/>
          <path d="M913 368v33M913 404.500v9.500M913 417v33" stroke="#909090" stroke-width="1.500"/>
          <path d="M791 435h379.500v32.500H791zM856 435v-52.500h114V435" stroke="#000" stroke-width="1.800"/>
          <path d="M1103 401.500C1134 401.500 1165.800 433 1165.800 465C1165.800 483 1148 495.500 1124.500 495.500C1091 495.500 1064.500 470 1064.500 440C1064.500 417 1080 401.500 1103 401.500z" stroke="#000" stroke-width="1.600"/>
        </g>
        <svg x="399" y="395" width="440" height="290" viewBox="0 0 1320 870">
          <g stroke="#777" stroke-width="3">
            <path d="M459 234v177M459 421v30M459 459v177M259 436h190M455 436h10M485 436h175"/>
            <path d="M1085 318v92M968 436h80M1125 436h78"/>
            <path d="M653 154v60M653 230v26M653 270v58M653 542v60M653 616v28M653 658v58M179 629h60M293 629h60M252 629h28M566 629h60M680 629h61M639 629h28"/>
          </g>
          <g stroke="#111" stroke-width="3"><path d="M179 241h60M293 241h60M252 241h28M566 241h60M680 241h61M639 241h28M265 154v60M265 227v28M265 270v58M265 542v60M265 616v28M265 658v58"/></g>
          <g stroke="#000" stroke-width="4.500">
            <path d="M437 69L512 72 587 91 1135 296 1182 323 1213 362 1229 407V463L1213 506 1180 546 1135 572 592 776 514 797 432 800 356 786 286 757 220 712 167 656 126 590 101 514 93 436 101 355 126 282 168 212 219 157 286 111 356 82z"/>
            <path d="M459 264L512 272 560 297 598 333 622 382 630 436 622 488 598 538 560 573 510 598 459 606 406 598 357 573 319 538 295 488 288 436 295 382 319 333 357 297 406 272z"/>
            <path d="M459 318L504 326 542 351 567 390 576 436 567 481 542 518 504 543 459 551 413 543 376 518 350 481 342 436 350 390 376 351 413 326z"/>
            <path d="M1062 349H1107L1140 366 1163 399 1172 435 1163 471 1140 504 1107 521H1062L1029 504 1004 471 997 435 1004 399 1029 366z"/>
            <path id="bolt" d="M257 184L291 188 316 211 324 241 316 273 291 292 257 299 228 285 208 256V226L228 198z"/>
            <use href="#bolt" x="387"/><use href="#bolt" y="387"/><use href="#bolt" x="387" y="387"/>
          </g>
          <path d="M1085 436v114" stroke="#fba04a" stroke-width="9"/>
          <path d="M1083 414v34M1063 429l40 10M1103 429l-40 10M1072 452l11-16 12 16" stroke="#fba04a" stroke-width="5"/>
          <path d="M1085 551l14 27-13 83-15-83z" fill="#ee8e35"/>
          <path d="M1060 600l45-17" stroke="#000" stroke-width="4"/>
        </svg>
        <text x="10" y="798">"A3_1"</text>
      </svg>

      <form class="dialog">
        <header><svg viewBox="50 104 42 42"><circle cx="71" cy="125" r="12" fill="none" stroke="#fff" stroke-width="6"/><path d="M71 105v8M71 137v8M51 125h8M83 125h8M57 111l5 5M80 134l5 5M57 139l5-5M80 116l5-5" stroke="#fff" stroke-width="6"/></svg><h2>局部剖</h2><button type="button" aria-label="帮助">?</button><button type="button" aria-label="关闭"><svg viewBox="0 0 12 12"><path d="M1 1l10 10M11 1L1 11" stroke="#fff" stroke-width="2"/></svg></button></header>
        <fieldset class="modes">
          <label><input type="radio" name="mode" checked>创建</label><label><input type="radio" name="mode">编辑</label><label><input type="radio" name="mode">删除</label>
        </fieldset>
        <div class="steps">
          <button type="button" aria-label="选择视图"><svg viewBox="270 303 78 78"><path class="k" d="M280 319h58v43h-58z" fill="#fff"/><path class="k" d="M295 311v64M273 346h53"/><path d="M313 322v12M325 322v12M318 340h4" stroke="#222" stroke-width="3" stroke-dasharray="3 4"/><path d="M290 341h10v10h-10z" fill="#c00"/></svg></button>
          <button type="button" aria-label="指出基点"><svg viewBox="372 303 78 78"><path class="k" d="M382 319h58v43h-58z" fill="#fff"/><path d="M415 324v12M427 324v12M420 341h4" stroke="#222" stroke-width="3" stroke-dasharray="3 4"/><path d="M421 313v14M414 321h14" stroke="#c00" stroke-width="5"/></svg></button>
          <button type="button" aria-label="指出拉伸矢量"><svg viewBox="474 303 78 78"><path class="k" d="M484 313h58v31h-58z" fill="#fff"/><circle class="k" cx="523" cy="328" r="7"/><path d="M523 328v32" stroke="#c00" stroke-width="3"/><path d="M516 359h14l-7 14z" fill="#a00"/></svg></button>
          <button type="button" class="on" aria-label="选择曲线"><svg viewBox="576 303 78 78"><path class="k" d="M586 319h58v43h-58z" fill="#fff"/><path d="M606 319q-2 16 18 35l19-6" fill="none" stroke="#c00" stroke-width="3"/><path d="M619 324v12M631 324v12M624 340h4" stroke="#222" stroke-width="3" stroke-dasharray="3 4"/></svg></button>
          <button type="button" disabled aria-label="修改边界曲线"><svg viewBox="678 300 78 78"><path d="M692 307h57v42h-57z" fill="#f4f4f4" stroke="#aaa" stroke-width="3"/><path d="M718 314v14M732 314v14M725 330h4" stroke="#aaa" stroke-width="3" stroke-dasharray="3 4"/><path d="M686 370l22-24 8-10" stroke="#999" stroke-width="9"/><path d="M688 367l22-24" stroke="#ddd" stroke-width="3"/></svg></button>
        </div>
        <div class="pair"><button type="button">链</button><button type="button">取消选择上一个</button></div>
        <label class="through"><input type="checkbox">切穿模型</label>
        <div class="actions"><button type="button" disabled>确定</button><button type="button" disabled>应用</button><button type="button" class="primary">取消</button></div>
      </form>

      <div class="tip"><svg viewBox="0 0 48 48"><path d="M30 4l5 10 11 2-8 8 2 12-10-6-11 6 3-12-8-8 11-2z" fill="#ffe0bd"/><path d="M3 44Q24 38 24 24T44 3" fill="none" stroke="#2fb5d0" stroke-width="4"/></svg>Spline1 / SKETCH_ORTHO2_000</div>
    </div>
  </section>
</main>

<footer class="status"><span>选择起点附近的断裂线</span><strong>Spline1 / SKETCH_ORTHO2_000</strong></footer>
<div class="mark">CSDN @山涧果子</div>
</body>
</html>
```
FILE: styles.css
```css
* { box-sizing: border-box; }
body {
  margin: 0;
  height: 100vh;
  display: flex;
  flex-direction: column;
  overflow: hidden;
  background: #fff;
  color: #222;
  font: 12px/16px "Noto Sans", "Noto Sans CJK SC", sans-serif;
}
button, input, select { font: inherit; color: inherit; }
button { padding: 0; border: 0; background: none; }
a { color: inherit; text-decoration: none; }
h1, h2 { margin: 0; font: inherit; }
svg { flex: none; display: block; }
.defs { position: absolute; width: 0; height: 0; }
.tri { width: 7px; height: 4px; }
.k, .g, .o, .c { stroke-width: 3; }
.k:not([fill]), .g:not([fill]), .o:not([fill]), .c:not([fill]) { fill: none; }
.k { stroke: #333; }
.g { stroke: #555; }
.o { stroke: #ec7a08; }
.c { stroke: #00a9ce; }

/* title bar and tabs */
.top { background: linear-gradient(90deg, #00648a, #077eaa); color: #fff; }
.titlebar { display: flex; align-items: center; height: 27px; padding-bottom: 1px; }
.brand { width: 38px; padding-left: 3px; font: 800 20px/26px Inter, sans-serif; }
.qat { display: flex; align-items: center; font-size: 11px; }
.sep { width: 1px; height: 20px; margin: 0 2px 0 3px; background: #00486a; }
.q { display: flex; justify-content: center; align-items: center; width: 23px; height: 24px; }
.q svg { width: 17px; height: 17px; fill: none; stroke: #fff; stroke-width: 3; }
.q.q-wide { width: 34px; padding-right: 3px; }
.q.q-arrow { width: 14px; }
.q.q-arrow svg, .q svg.tri { width: 7px; height: 4px; stroke: none; }
.q.q-arrow svg.bar { width: 8px; height: 7px; fill: #fff; }
.q.q-label { width: auto; padding-left: 3px; gap: 4px; }
.q.q-label .tri { margin: 0 3px 0 1px; }
.dim { opacity: .3; }
.titlebar h1 { flex: 1; text-align: center; font-size: 12px; }
.siemens { font: 900 13px/16px Inter, sans-serif; padding-top: 2px; }
.win { display: flex; gap: 9px; padding: 0 7px 0 25px; }
.win svg { width: 14px; height: 14px; fill: none; stroke: #fff; }
.tabs { display: flex; height: 29px; padding-bottom: 2px; font-size: 13px; line-height: 26px; white-space: nowrap; }
.tabs a { padding: 0 12px; }
.tabs .file { width: 86px; padding-left: 20px; }
.tabs .on { color: #ffc845; border-bottom: 2px solid #ffc845; }
.find { display: flex; align-items: center; width: 178px; height: 22px; margin: 3px 0 0 auto; background: #fff; border: 1px solid #777; }
.find input { flex: 1; min-width: 0; padding: 0; border: 0; background: none; outline: 0; font-size: 11px; color: #333; }
.find input::placeholder { color: #999; opacity: 1; }
.find svg { width: 17px; height: 17px; margin-right: 2px; }
.tools { display: flex; align-items: center; gap: 9px; padding: 0 9px; font-size: 11px; }
.tools svg { width: 17px; height: 17px; fill: none; stroke: #fff; stroke-width: 3; }
.learn { display: flex; align-items: center; gap: 4px; }
.alert { margin-left: 8px; }
.tools .alert svg { width: 6px; }

/* ribbon */
.ribbon { display: flex; height: 94px; padding: 4px 0 3px; border-bottom: 1px solid #d9d9d9; font-size: 11px; }
.group { display: flex; flex-direction: column; border-right: 1px solid #d9d9d9; }
.group .body { display: flex; gap: 1px; height: 74px; padding: 0 5px 0 8px; }
.group footer { display: flex; align-items: center; height: 12px; padding-right: 7px; color: #006487; line-height: 12px; }
.group footer span { flex: 1; text-align: center; }
.group .tri { color: #111; }
.cmd { display: flex; flex-direction: column; align-items: center; width: 52px; white-space: nowrap; }
.cmd > svg:first-child { width: 35px; height: 35px; margin-bottom: 2px; }
.cmd .tri { margin-top: 4px; }
.cmd.narrow { width: 40px; }
.cmd.wide { width: 64px; }
.letter { position: relative; height: 35px; margin-bottom: 2px; color: #ec7a08; font: bold 43px/36px "Liberation Serif", serif; }
.letter svg { position: absolute; right: -3px; bottom: 2px; width: 21px; height: 21px; }
.small { display: grid; grid-template-rows: 35px 33px; }
.c2 { grid-template-columns: repeat(2, 33px); }
.c3 { grid-template-columns: repeat(3, 33px); }
.c6 { grid-template-columns: repeat(6, 33px); }
.small button { display: flex; align-items: center; justify-content: center; }
.small svg { width: 30px; height: 28px; }
.more { display: flex; align-items: center; justify-content: center; width: 14px; height: 35px; }
.end { margin: auto 5px 8px auto; }

/* selection bar */
.selbar { display: flex; align-items: center; height: 28px; border-bottom: 1px solid #a8a8a8; font-size: 11px; }
.menu { display: flex; align-items: center; padding: 0 8px 0 12px; white-space: pre; }
.menu svg:first-child { width: 11px; height: 9px; margin-right: 7px; }
.menu .tri { margin-left: 5px; }
.selbar .sep { height: 20px; margin: 0 12px 0 0; background: #d0d0d0; }
.combo { position: relative; height: 22px; border: 1px solid #777; }
.combo::after { content: ""; position: absolute; right: 4px; top: 9px; border: 4px solid transparent; border-top-color: #111; border-bottom: 0; pointer-events: none; }
.combo select { width: 100%; height: 20px; padding: 0 2px; border: 0; outline: 0; background: #fff; appearance: none; }
.combo-a { width: 149px; margin-right: 5px; }
.combo-b { width: 156px; margin: 0 5px; }
.s { display: flex; align-items: center; justify-content: center; width: 24px; height: 22px; }
.s svg { width: 17px; height: 17px; fill: none; stroke: #333; stroke-width: 3; }
.s.off svg { stroke: #aaa; }
.s.on { margin-right: 2px; background: #cde6eb; }
.s.s-arrow { width: 16px; margin-right: 6px; }
.s.s-arrow .tri { width: 7px; height: 4px; stroke: none; }

/* main area */
main { display: flex; flex: 1; min-height: 0; }
.rail { display: flex; flex-direction: column; width: 37px; background: #dcdcdc; border-right: 1px solid #a8a8a8; }
.rail button { display: flex; align-items: center; justify-content: center; width: 34px; height: 44px; margin-left: 3px; }
.rail .rail-gear { height: 30px; width: 30px; margin-bottom: 3px; }
.rail svg { width: 24px; height: 24px; fill: none; stroke: #444; stroke-width: 3; }
.rail .rail-gear svg { width: 17px; height: 17px; }
.rail .on { background: #fff; border: 1px solid #a8a8a8; border-right: 0; }

.nav { display: flex; flex-direction: column; width: 323px; padding: 0 9px 6px 8px; border-right: 1px solid #a8a8a8; }
.nav > header { display: flex; align-items: center; height: 27px; padding: 0 2px 2px 0; margin-left: -2px; }
.nav > header svg { width: 16px; height: 16px; margin-right: 4px; }
.nav > header h2 { flex: 1; font-size: 12px; }
.nav > header button { width: 12px; height: 11px; border: 1px solid #000; border-top-width: 2px; }
.tree { display: flex; flex-direction: column; flex: 1; min-height: 0; border: 1px solid #d4d4d4; }
.rows { flex: 1; min-height: 0; overflow: hidden; }
table { width: 100%; table-layout: fixed; border-collapse: separate; border-spacing: 0; }
.w-cur { width: 39px; }
.w-new { width: 24px; }
.w-note { width: 44px; }
th { height: 21px; padding: 2px 6px 0; background: #f0f0f0; border-right: 1px solid #d4d4d4; border-bottom: 1px solid #ccc; font-weight: normal; text-align: left; white-space: nowrap; }
th .up { display: inline-block; width: 9px; height: 5px; margin: 0 0 2px 18px; }
td { height: 20px; padding: 0; border-right: 1px solid #e4e4e4; border-bottom: 1px solid #e8e8e8; }
th:last-child, td:last-child { border-right: 0; }
tr:nth-child(even) td { background: #fafafa; }
td > .ic { margin: 0 auto; width: 15px; }
td > .pat { margin-left: 4px; }
.n { display: flex; align-items: center; height: 19px; white-space: nowrap; overflow: hidden; }
.n span { flex: 1; height: 19px; padding-left: 3px; line-height: 19px; }
.g0, .g1, .g2 { height: 19px; stroke: #999; stroke-dasharray: 1 1; }
.g0 { width: 19px; }
.g1 { width: 38px; }
.g2 { width: 57px; }
.g0 use, .g1 use, .g2 use { stroke-dasharray: none; }
.ic { width: 16px; height: 16px; }
tr.sel td:not(:first-child), tr.sel .n span { background: #cde6eb; }
tr.sel td:first-child { background: #fff; }
.hid span { color: #a0a0a0; }
.strong span { font-weight: bold; }
.hscroll { height: 17px; padding: 8px 60px 0 17px; background: #f0f0f0; }
.hscroll i { display: block; height: 2px; background: #888; }
.split { height: 6px; margin-top: 2px; background: #dcdcdc; border: 1px solid #999; }
.acc { padding-top: 2px; }
.acc button { display: flex; align-items: center; gap: 9px; width: 100%; height: 24px; padding: 2px 0 0 10px; border-bottom: 2px solid #d0d0d0; color: #006487; font-size: 14px; }
.acc button::before { content: ""; border: 5px solid transparent; border-left-color: #006487; border-right: 0; }

.work { display: flex; flex-direction: column; flex: 1; min-width: 0; }
.docs { height: 27px; border-bottom: 2px solid #005f87; }
.doc { display: flex; align-items: center; width: 216px; height: 25px; padding: 0 5px 0 7px; background: #005f87; color: #fff; white-space: nowrap; }
.doc span { flex: 1; padding-left: 6px; }
.doc svg { width: 13px; height: 13px; }
.doc svg + svg { margin-left: 3px; }
.canvas { position: relative; flex: 1; min-height: 0; background: #ccc; border-left: 1px solid #ddd; overflow: hidden; }
.drawing { position: absolute; width: 100%; height: 100%; fill: none; }
.drawing text { fill: #111; font: 13px "Liberation Sans", sans-serif; }
.tip { position: absolute; left: 746px; top: 221px; display: flex; align-items: center; height: 21px; padding: 0 1px; gap: 5px; border: 1px solid #aaa; background: rgba(255, 255, 255, .6); color: #444; white-space: nowrap; }
.tip svg { width: 17px; height: 17px; }

/* dialog */
.dialog { position: absolute; left: 0; top: 0; width: 321px; padding-bottom: 10px; background: #f0f0f0; border-bottom: 1px solid #ddd; }
.dialog header { display: flex; align-items: center; height: 24px; padding: 0 9px 0 6px; background: #005f87; color: #fff; }
.dialog header svg { width: 14px; height: 14px; }
.dialog h2 { flex: 1; padding-left: 8px; font-size: 14px; }
.dialog header button { font: bold 16px/20px "Noto Sans", sans-serif; margin-left: 13px; }
.dialog header button svg { width: 12px; height: 12px; }
.modes { display: flex; align-items: center; gap: 16px; width: 179px; height: 28px; margin: 8px 0 0 9px; padding: 0 5px 1px; border: 1px solid #d9d9d9; background: #fff; }
label { display: flex; align-items: center; gap: 4px; }
.dialog input { width: 13px; height: 13px; margin: 0; }
.dialog input[type=radio] { appearance: none; border: 1px solid #666; border-radius: 50%; background: #f4f4f4; }
.dialog input[type=radio]:checked { border: 4px solid #005fb8; background: #fff; }
.steps { display: flex; gap: 2px; width: 178px; height: 39px; margin: 4px 0 0 71px; padding: 2px 4px; border: 1px solid #d9d9d9; background: #fff; }
.steps button { display: flex; align-items: center; justify-content: center; width: 32px; height: 32px; }
.steps svg { width: 26px; height: 26px; }
.steps .on { background: #cde6eb; outline: 1px dotted #000; outline-offset: -3px; }
.pair { display: flex; gap: 2px; width: 302px; height: 39px; margin: 2px 0 0 9px; padding: 2px 6px 6px 2px; border: 1px solid #d9d9d9; }
.pair button { flex: 1; border: 1px solid #666; }
.through { height: 16px; margin: 5px 0 0 10px; }
.actions { display: flex; justify-content: flex-end; gap: 5px; margin: 14px 16px 0 0; }
.actions button { width: 54px; height: 25px; border: 1px solid #bbb; color: #aaa; }
.actions .primary { border-color: #005f87; color: #005f87; }

.status { display: grid; grid-template-columns: 1fr auto 1fr; align-items: center; height: 23px; padding: 0 0 1px 3px; border-top: 1px solid #a8a8a8; border-bottom: 1px solid #a9bdbd; font-size: 11px; font-weight: bold; }
.status strong { padding-left: 120px; }
.mark { position: absolute; right: 4px; bottom: 8px; color: rgba(255, 255, 255, .55); font: 36px/48px "Liberation Sans", "Noto Sans CJK SC", sans-serif; font-weight: 300; text-shadow: 1px 1px 1px rgba(90, 90, 90, .7); }
```
